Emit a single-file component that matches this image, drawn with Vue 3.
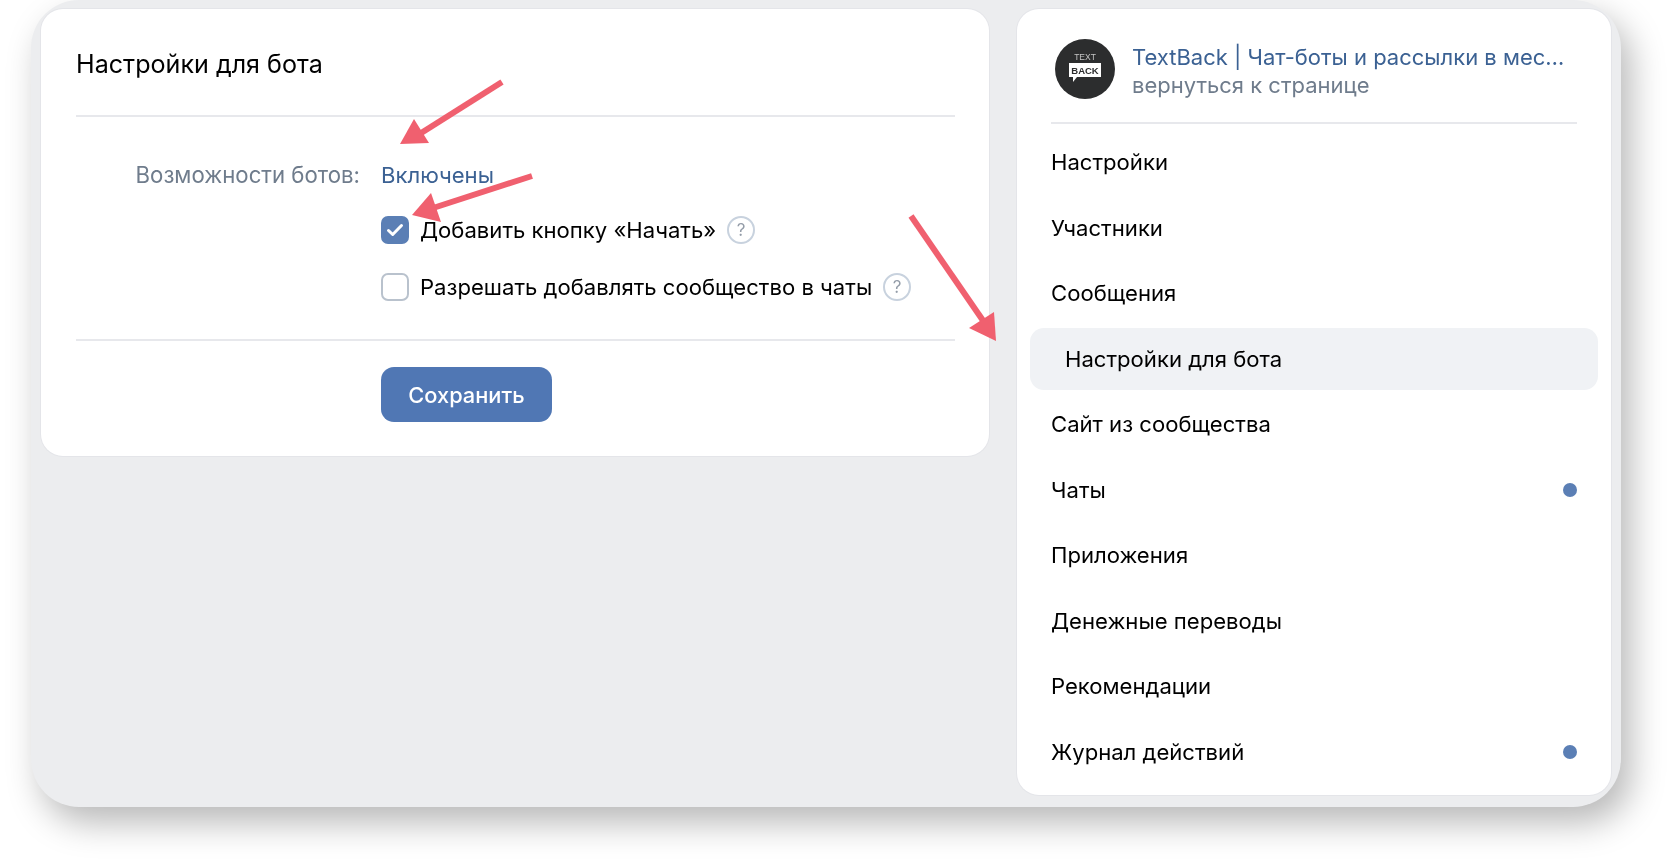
<template>
  <div class="page">
    <div class="window">
      <main class="card settings">
        <h1 class="title">Настройки для бота</h1>
        <div class="form">
          <div class="label">Возможности ботов:</div>
          <div class="fields">
            <a class="state">Включены</a>
            <div v-for="opt in options" :key="opt.text" class="option">
              <span class="checkbox" :class="{ checked: opt.checked }">
                <svg v-if="opt.checked" width="18" height="14" viewBox="0 0 18 14">
                  <path d="M2.5 7.5l4.2 4L15.5 2.5" fill="none" stroke="#fff" stroke-width="3" stroke-linecap="round" stroke-linejoin="round" />
                </svg>
              </span>
              <span class="option-text">{{ opt.text }}</span>
              <span class="help">?</span>
            </div>
          </div>
        </div>
        <div class="actions">
          <button class="save">Сохранить</button>
        </div>
      </main>

      <aside class="card sidebar">
        <div class="group">
          <svg class="logo" width="60" height="60" viewBox="0 0 60 60">
            <circle cx="30" cy="30" r="30" fill="#2c2d2e" />
            <text x="30" y="21" text-anchor="middle" class="logo-top">TEXT</text>
            <path d="M14 24h32v14H22l-4 5v-5h-4z" fill="#fff" />
            <text x="30" y="35" text-anchor="middle" class="logo-back">BACK</text>
          </svg>
          <div class="group-info">
            <a class="group-name">TextBack | Чат-боты и рассылки в мес…</a>
            <a class="group-back">вернуться к странице</a>
          </div>
        </div>
        <nav class="menu">
          <a v-for="item in menu" :key="item.text" class="menu-item" :class="{ active: item.active }">
            <span>{{ item.text }}</span>
            <i v-if="item.dot" class="dot"></i>
          </a>
        </nav>
      </aside>
    </div>

    <svg class="arrows" width="1680" height="861" viewBox="0 0 1680 861">
      <g v-for="a in arrows" :key="a.head">
        <line :x1="a.x1" :y1="a.y1" :x2="a.x2" :y2="a.y2" stroke="#f0606f" stroke-width="6" />
        <polygon :points="a.head" fill="#f0606f" />
      </g>
    </svg>
  </div>
</template>

<script setup>
const options = [
  { text: 'Добавить кнопку «Начать»', checked: true },
  { text: 'Разрешать добавлять сообщество в чаты', checked: false },
];

const menu = [
  { text: 'Настройки' },
  { text: 'Участники' },
  { text: 'Сообщения' },
  { text: 'Настройки для бота', active: true },
  { text: 'Сайт из сообщества' },
  { text: 'Чаты', dot: true },
  { text: 'Приложения' },
  { text: 'Денежные переводы' },
  { text: 'Рекомендации' },
  { text: 'Журнал действий', dot: true },
];

const arrows = [
  { x1: 502, y1: 82, x2: 418, y2: 135, head: '400,144 414,119 429,143' },
  { x1: 532, y1: 176, x2: 430, y2: 209, head: '412,215 431,193 441,222' },
  { x1: 911, y1: 216, x2: 984, y2: 322, head: '996,341 994,312 969,328' },
];
</script>

<style scoped>
.page {
  position: relative;
  width: 1680px;
  height: 861px;
  overflow: hidden;
  background: #fff;
  font-family: Inter, "Noto Sans", sans-serif;
  color: #000;
  filter: blur(0.4px);
}

.window {
  display: flex;
  align-items: flex-start;
  gap: 28px;
  width: 1590px;
  height: 807px;
  margin-left: 31px;
  padding: 9px 10px 12px;
  box-sizing: border-box;
  background: #ecedef;
  border-radius: 48px;
  box-shadow: 10px 16px 34px rgba(0, 0, 0, 0.28);
}

.card {
  background: #fff;
  border-radius: 22px;
  box-shadow: 0 0 0 1px #e4e5e9;
  box-sizing: border-box;
}

.settings {
  width: 948px;
  padding: 0 34px 34px 35px;
}

.title {
  height: 108px;
  margin: 0;
  padding-top: 37px;
  box-sizing: border-box;
  border-bottom: 2px solid #e7e8ec;
  font-size: 25.1px;
  line-height: 36px;
  font-weight: 400;
}

.form {
  display: flex;
  gap: 21px;
  padding: 41px 0 38px;
  border-bottom: 2px solid #e7e8ec;
  font-size: 22.1px;
  line-height: 34px;
}

.label {
  width: 284px;
  text-align: right;
  color: #6f7c8c;
  font-size: 22.2px;
}

.state {
  display: block;
  color: #3b6193;
  margin-bottom: 24px;
}

.option {
  display: flex;
  align-items: center;
  height: 28px;
  margin-bottom: 29px;
}

.option:last-child {
  margin-bottom: 0;
}

.checkbox {
  display: flex;
  align-items: center;
  justify-content: center;
  width: 28px;
  height: 28px;
  box-sizing: border-box;
  border: 2.5px solid #b9c2cd;
  border-radius: 7px;
  margin-right: 11px;
}

.checkbox.checked {
  background: #5b7fb5;
  border-color: #5b7fb5;
}

.help {
  display: flex;
  align-items: center;
  justify-content: center;
  width: 28px;
  height: 28px;
  box-sizing: border-box;
  margin-left: 11px;
  border: 2px solid #c8d2de;
  border-radius: 50%;
  font-size: 17px;
  color: #939ca8;
}

.actions {
  padding: 26px 0 0 305px;
}

.save {
  display: block;
  width: 171px;
  height: 55px;
  border: 0;
  border-radius: 13px;
  background: #5077b4;
  color: #fff;
  font: 500 21.8px Inter, "Noto Sans", sans-serif;
}

.sidebar {
  width: 594px;
  height: 786px;
  padding: 0 13px;
}

.group {
  display: flex;
  gap: 17px;
  margin: 0 21px 7px;
  padding: 30px 0 23px 4px;
  border-bottom: 2px solid #e7e8ec;
}

.logo {
  flex: none;
  display: block;
}

.logo-top {
  font: 400 8.5px "Liberation Sans", sans-serif;
  fill: #c4c4c4;
}

.logo-back {
  font: 700 9.5px "Liberation Sans", sans-serif;
  fill: #2c2d2e;
}

.group-info {
  min-width: 0;
  margin-top: 5px;
  font-size: 22px;
  line-height: 27.5px;
}

.group-name {
  display: block;
  white-space: nowrap;
  color: #3b6193;
}

.group-back {
  display: block;
  color: #6f7c8c;
}

.menu-item {
  display: flex;
  align-items: center;
  justify-content: space-between;
  height: 62px;
  margin-bottom: 3.5px;
  padding: 0 21px 0 21px;
  border-radius: 14px;
  font-size: 22.1px;
}

.menu-item.active {
  padding-left: 35px;
  background: #f0f2f5;
}

.dot {
  width: 14px;
  height: 14px;
  border-radius: 50%;
  background: #5b7fb5;
}

.arrows {
  position: absolute;
  top: 0;
  left: 0;
  pointer-events: none;
}
</style>
